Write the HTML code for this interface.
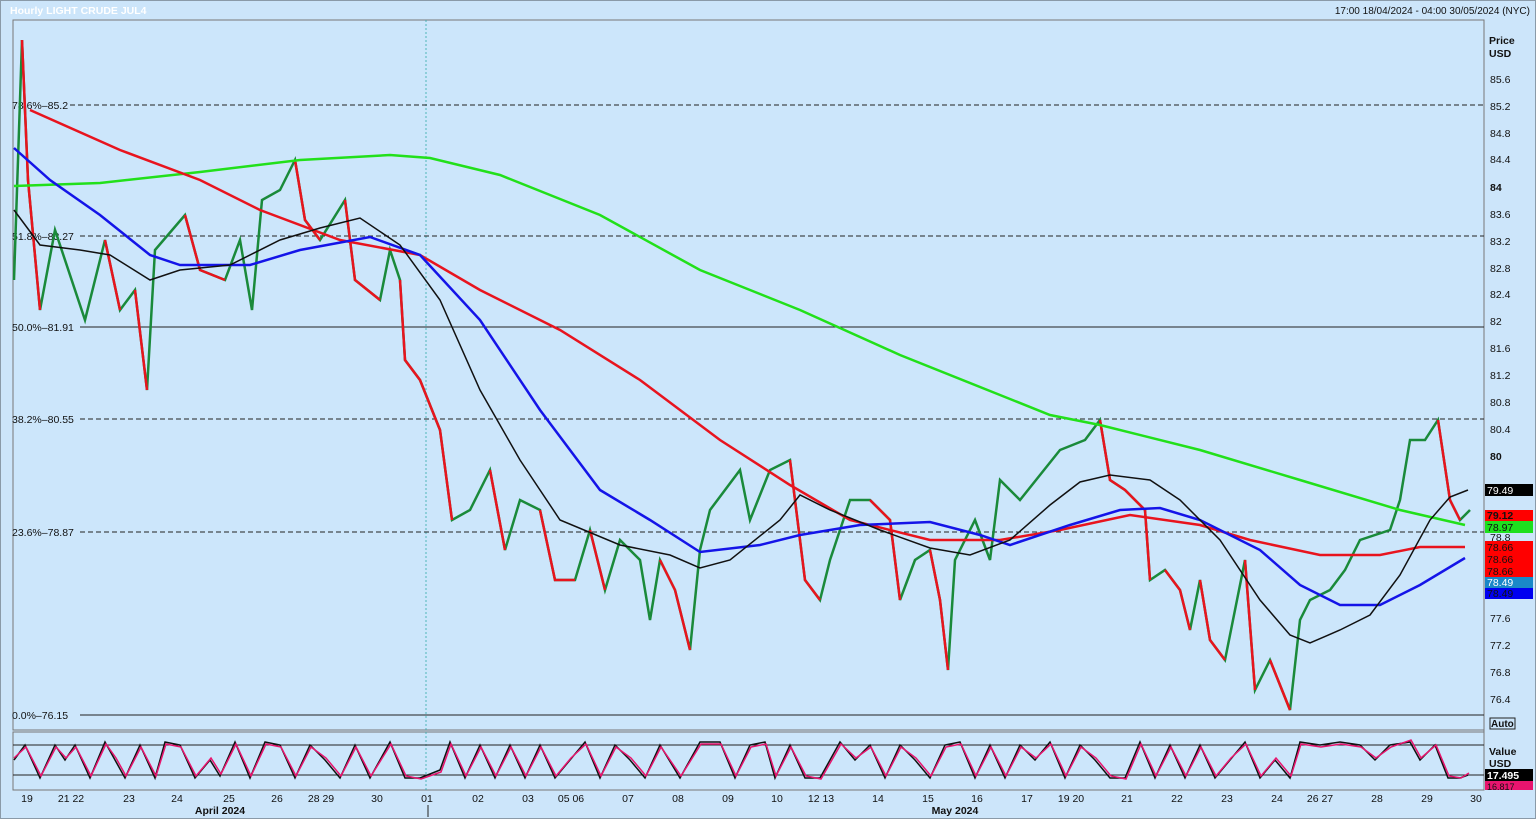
<!DOCTYPE html>
<html><head><meta charset="utf-8"><style>
body{margin:0;width:1536px;height:819px;background:#cce5fa;font-family:"Liberation Sans",sans-serif;overflow:hidden}
svg{display:block}
text{font-family:"Liberation Sans",sans-serif;font-size:10.5px;fill:#111}
</style></head><body>
<svg width="1536" height="819" viewBox="0 0 1536 819">
<rect x="0" y="0" width="1536" height="819" fill="#cce5fa"/>
<rect x="0.5" y="0.5" width="1535" height="818" fill="none" stroke="#8a9aa8"/>
<text x="10" y="14" style="fill:#fff;font-weight:bold;font-size:10.5px">Hourly LIGHT CRUDE JUL4</text>
<text x="1530" y="14" text-anchor="end" style="font-size:10px">17:00 18/04/2024 - 04:00 30/05/2024 (NYC)</text>
<rect x="13" y="20" width="1471" height="710" fill="#cce6fb" stroke="#777"/>
<rect x="13" y="732" width="1471" height="58" fill="#cce6fb" stroke="#777"/>
<line x1="1484" y1="20" x2="1484" y2="790" stroke="#777"/>
<line x1="426" y1="20" x2="426" y2="790" stroke="#3aa" stroke-dasharray="2,2" stroke-width="0.8"/>
<g stroke="#222" stroke-width="1" stroke-dasharray="5,3">
<line x1="70" y1="105" x2="1484" y2="105"/><line x1="80" y1="236" x2="1484" y2="236"/>
<line x1="80" y1="419" x2="1484" y2="419"/><line x1="80" y1="532" x2="1484" y2="532"/>
</g>
<g stroke="#222" stroke-width="1">
<line x1="80" y1="327" x2="1484" y2="327"/><line x1="80" y1="715" x2="1484" y2="715"/>
<line x1="13" y1="745" x2="1484" y2="745"/><line x1="13" y1="775" x2="1484" y2="775"/>
</g>
<g style="font-size:10px">
<text x="12" y="109">78.6%–85.2</text><text x="12" y="240">51.8%–83.27</text>
<text x="12" y="331">50.0%–81.91</text><text x="12" y="423">38.2%–80.55</text>
<text x="12" y="536">23.6%–78.87</text><text x="12" y="719">0.0%–76.15</text>
</g>
<!-- price -->
<polyline fill="none" stroke="#1a8a3a" stroke-width="2.5" points="14,280 22,40 28,180 40,310 55,230 85,320 105,240 120,310 135,290 147,390 155,250 185,215 200,270 225,280 240,240 252,310 262,200 280,190 295,160 305,220 320,240 345,200 355,280 380,300 390,250 400,280 405,360 420,380 440,430 452,520 470,510 490,470 505,550 520,500 540,510 555,580 575,580 590,530 605,590 620,540 640,560 650,620 660,560 675,590 690,650 700,550 710,510 740,470 750,520 770,470 790,460 805,580 820,600 830,560 850,500 870,500 890,520 900,600 915,560 930,550 940,600 948,670 955,560 975,520 990,560 1000,480 1020,500 1060,450 1085,440 1100,420 1110,480 1125,490 1145,510 1150,580 1165,570 1180,590 1190,630 1200,580 1210,640 1225,660 1245,560 1255,690 1270,660 1290,710 1300,620 1310,600 1330,590 1345,570 1360,540 1390,530 1400,500 1410,440 1425,440 1438,420 1450,500 1460,520 1470,510"/>
<g fill="none" stroke="#e8141e" stroke-width="2.5">
<polyline points="22,40 28,180 40,310"/><polyline points="105,240 120,310"/><polyline points="135,290 147,390"/>
<polyline points="185,215 200,270 225,280"/><polyline points="295,160 305,220 320,240"/><polyline points="345,200 355,280 380,300"/>
<polyline points="400,280 405,360 420,380 440,430 452,520"/><polyline points="490,470 505,550"/><polyline points="540,510 555,580 575,580"/>
<polyline points="590,530 605,590"/><polyline points="660,560 675,590 690,650"/><polyline points="790,460 805,580 820,600"/>
<polyline points="870,500 890,520 900,600"/><polyline points="930,550 940,600 948,670"/><polyline points="1100,420 1110,480 1125,490 1145,510 1150,580"/>
<polyline points="1165,570 1180,590 1190,630"/><polyline points="1200,580 1210,640 1225,660"/><polyline points="1245,560 1255,690"/>
<polyline points="1270,660 1290,710"/><polyline points="1438,420 1450,500 1460,520"/>
</g>
<!-- MAs -->
<polyline fill="none" stroke="#22e01a" stroke-width="2.5" points="14,186 100,183 200,172 300,160 390,155 430,158 500,175 600,215 700,270 800,310 900,355 1000,395 1050,415 1100,425 1200,450 1300,480 1400,510 1465,525"/>
<polyline fill="none" stroke="#e8141e" stroke-width="2.5" points="30,110 120,150 200,180 260,210 340,240 420,255 480,290 560,330 640,380 720,440 790,485 850,520 930,540 1000,540 1060,530 1130,515 1200,525 1250,540 1320,555 1380,555 1420,547 1465,547"/>
<polyline fill="none" stroke="#1414e8" stroke-width="2.5" points="14,148 50,180 100,215 150,255 180,265 250,265 300,250 370,237 420,255 480,320 540,410 600,490 650,520 700,552 760,545 800,535 860,525 930,522 980,535 1010,545 1070,525 1120,510 1160,508 1200,520 1260,550 1300,585 1340,605 1380,605 1420,585 1465,558"/>
<polyline fill="none" stroke="#111" stroke-width="1.5" points="14,210 40,245 80,250 110,255 150,280 180,270 230,265 280,240 320,228 360,218 400,245 440,300 480,390 520,460 560,520 620,545 670,555 700,568 730,560 780,520 800,495 830,510 880,530 930,548 970,555 1010,540 1050,505 1080,482 1110,475 1150,480 1180,500 1220,540 1260,600 1290,635 1310,643 1340,630 1370,615 1400,575 1430,520 1450,497 1468,490"/>
<!-- oscillator -->
<polyline fill="none" stroke="#111" stroke-width="1.5" points="14,760 25,745 40,778 55,745 65,760 75,745 90,778 105,742 115,760 125,778 140,745 155,778 165,742 180,745 195,778 210,760 220,776 235,742 250,778 265,742 280,745 295,778 310,745 325,760 340,778 355,745 370,778 390,742 405,778 420,778 440,770 450,742 465,778 480,745 495,778 510,745 525,778 540,745 555,778 570,760 585,742 600,778 615,745 630,760 645,778 660,745 680,778 700,742 720,742 735,778 750,745 765,742 775,778 790,745 805,778 820,778 840,742 855,760 870,745 885,778 900,745 915,760 930,778 945,745 960,742 975,778 990,745 1005,778 1020,745 1035,760 1050,742 1065,778 1080,745 1095,760 1110,778 1125,778 1140,742 1155,778 1170,745 1185,778 1200,745 1215,778 1230,760 1245,742 1260,778 1275,760 1290,778 1300,742 1320,745 1340,742 1360,745 1375,760 1390,745 1410,742 1420,760 1435,745 1448,778 1460,778 1468,775"/>
<polyline fill="none" stroke="#e8146e" stroke-width="1.5" points="14,758 26,747 41,776 56,747 66,758 76,747 91,776 106,744 116,758 126,776 141,747 156,776 166,744 181,747 196,776 211,758 221,774 236,744 251,776 266,744 281,747 296,776 311,747 326,758 341,776 356,747 371,776 391,744 406,776 421,779 441,772 451,744 466,776 481,747 496,776 511,747 526,776 541,747 556,776 571,758 586,744 601,776 616,747 631,758 646,776 661,747 681,776 701,744 721,744 736,776 751,747 766,744 776,776 791,747 806,776 821,779 841,744 856,758 871,747 886,776 901,747 916,758 931,776 946,747 961,744 976,776 991,747 1006,776 1021,747 1036,758 1051,744 1066,776 1081,747 1096,758 1111,776 1126,779 1141,744 1156,776 1171,747 1186,776 1201,747 1216,776 1231,758 1246,744 1261,776 1276,758 1291,776 1301,744 1321,747 1341,744 1361,747 1376,758 1391,747 1411,740 1421,758 1436,745 1449,776 1461,778 1469,773"/>
<!-- right axis -->
<g style="font-size:11px">
<text x="1489" y="44" style="font-weight:bold">Price</text><text x="1489" y="57" style="font-weight:bold">USD</text>
<text x="1490" y="83">85.6</text><text x="1490" y="110">85.2</text><text x="1490" y="137">84.8</text><text x="1490" y="163">84.4</text>
<text x="1490" y="191" style="font-weight:bold">84</text><text x="1490" y="218">83.6</text><text x="1490" y="245">83.2</text><text x="1490" y="272">82.8</text>
<text x="1490" y="298">82.4</text><text x="1490" y="325">82</text><text x="1490" y="352">81.6</text><text x="1490" y="379">81.2</text>
<text x="1490" y="406">80.8</text><text x="1490" y="433">80.4</text><text x="1490" y="460" style="font-weight:bold">80</text>
<text x="1490" y="541">78.8</text><text x="1490" y="622">77.6</text><text x="1490" y="649">77.2</text><text x="1490" y="676">76.8</text><text x="1490" y="703">76.4</text>
</g>
<g style="font-size:11px">
<rect x="1485" y="484" width="48" height="12" fill="#000"/><text x="1487" y="494" style="fill:#fff">79.49</text>
<rect x="1485" y="510" width="48" height="11" fill="#f00"/><text x="1487" y="519" style="font-weight:bold">79.12</text>
<rect x="1485" y="521" width="48" height="12" fill="#1ee01e"/><text x="1487" y="531">78.97</text>
<rect x="1485" y="541" width="48" height="36" fill="#f00"/><text x="1487" y="551">78.66</text><text x="1487" y="563">78.66</text><text x="1487" y="575">78.66</text>
<rect x="1485" y="577" width="48" height="11" fill="#1a88c8"/><text x="1487" y="586" style="fill:#fff">78.49</text>
<rect x="1485" y="588" width="48" height="11" fill="#0000f0"/><text x="1487" y="597">78.49</text>
<rect x="1490" y="718" width="25" height="11" fill="none" stroke="#222"/><text x="1491" y="727" style="font-weight:bold;font-size:10px">Auto</text>
<text x="1489" y="755" style="font-weight:bold">Value</text><text x="1489" y="767" style="font-weight:bold">USD</text>
<rect x="1485" y="769" width="48" height="12" fill="#000"/><text x="1487" y="779" style="fill:#fff;font-weight:bold">17.495</text>
<rect x="1485" y="781" width="48" height="9" fill="#e8146e"/><text x="1487" y="790" style="font-size:9px">16.817</text>
</g>
<!-- bottom axis -->
<g style="font-size:10.5px" text-anchor="middle">
<text x="27" y="802">19</text><text x="71" y="802">21 22</text><text x="129" y="802">23</text><text x="177" y="802">24</text>
<text x="229" y="802">25</text><text x="277" y="802">26</text><text x="321" y="802">28 29</text><text x="377" y="802">30</text>
<text x="427" y="802">01</text><text x="478" y="802">02</text><text x="528" y="802">03</text><text x="571" y="802">05 06</text>
<text x="628" y="802">07</text><text x="678" y="802">08</text><text x="728" y="802">09</text><text x="777" y="802">10</text>
<text x="821" y="802">12 13</text><text x="878" y="802">14</text><text x="928" y="802">15</text><text x="977" y="802">16</text>
<text x="1027" y="802">17</text><text x="1071" y="802">19 20</text><text x="1127" y="802">21</text><text x="1177" y="802">22</text>
<text x="1227" y="802">23</text><text x="1277" y="802">24</text><text x="1320" y="802">26 27</text><text x="1377" y="802">28</text>
<text x="1427" y="802">29</text><text x="1476" y="802">30</text>
<text x="220" y="814" style="font-weight:bold">April 2024</text><text x="955" y="814" style="font-weight:bold">May 2024</text>
</g>
<line x1="428" y1="805" x2="428" y2="817" stroke="#222"/>
</svg>
</body></html>
